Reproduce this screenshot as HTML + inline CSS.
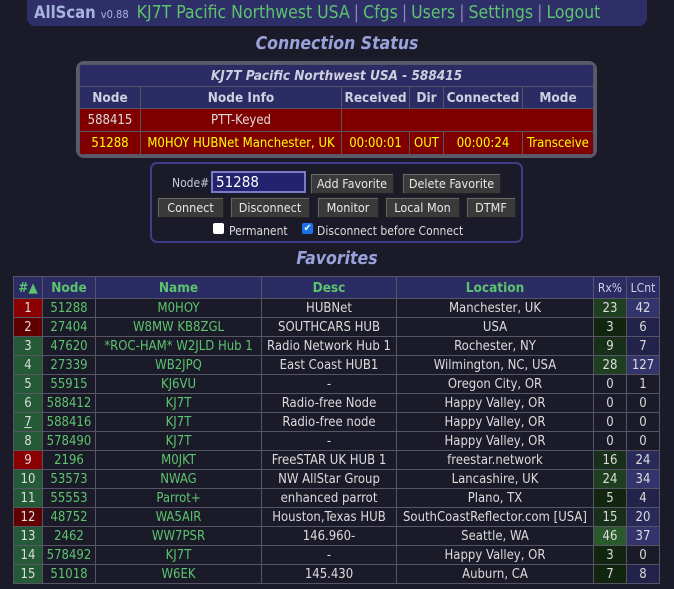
<!DOCTYPE html>
<html><head><meta charset="utf-8"><style>
body{margin:0;background:#1a1a28;font-family:"DejaVu Sans Condensed","Liberation Sans",sans-serif;color:#dcdcdc;width:674px;height:589px;overflow:hidden;position:relative}
.nav{position:absolute;left:27px;top:0;width:620px;height:26px;background:#2e2e68;border-radius:0 0 8px 8px;font-size:17.5px;line-height:25px;white-space:nowrap}
.nav b{color:#a8b4e0;margin-left:7px;font-size:16.5px}
.nav small{color:#a8b4e0;font-size:11px;margin-right:8px}
.nav span{color:#5cc46e}
.nav i{color:#8a8ab0;font-style:normal;margin:0 4px}
h2{position:absolute;margin:0;width:674px;text-align:center;font-style:italic;font-weight:bold;color:#9aa2dc;font-size:17.5px}
table{border-collapse:collapse;font-size:13px}
td,th{border:1px solid #555566;text-align:center;padding:0;white-space:nowrap}
.stw{position:absolute;left:76px;top:61px;width:515px;border:3px solid #5a5a6a;border-radius:8px;overflow:hidden}
.st{width:100%;font-size:13px}
.st th{background:#2c2c64;color:#cfcfe0;height:21px;font-size:13.5px}
.st td{background:#800000;height:22px}
.ctl{position:absolute;left:150px;top:162px;width:369px;height:77px;border:2px solid #3e3e88;border-radius:7px;font-size:12px}
.btn{position:absolute;background:#3a3a3a;border:1px solid #222;box-shadow:inset 1px 1px #666;color:#e8e8e8;font-size:12.5px;text-align:center;line-height:19px;height:19px}
.fav{position:absolute;left:13px;top:276px;width:647px;border:1px solid #555566}
.fav th{background:#2c2c64;color:#5cc46e;height:21px;font-size:13.5px}
.fav td{height:18px;color:#5cc46e}
.fav td.w{color:#dcdcdc}
.r{background:#8b0000}.dr{background:#600000}.g{background:#245a36}
.g1{background:#12260f}.g2{background:#18301a}.g3{background:#1e4020}.g4{background:#2a5a2e}
.b1{background:#22224a}.b2{background:#2a2a5a}.b3{background:#34346c}
</style></head><body>
<div class="nav"><b>AllScan</b> <small>v0.88</small><span>KJ7T Pacific Northwest USA</span><i>|</i><span>Cfgs</span><i>|</i><span>Users</span><i>|</i><span>Settings</span><i>|</i><span>Logout</span></div>
<h2 style="top:34px">Connection Status</h2>
<div class="stw">
<table class="st">
<tr><th colspan="6" style="font-style:italic">KJ7T Pacific Northwest USA - 588415</th></tr>
<tr><th style="width:60px">Node</th><th style="width:200px">Node Info</th><th style="width:67px">Received</th><th style="width:33px">Dir</th><th style="width:78px">Connected</th><th>Mode</th></tr>
<tr><td>588415</td><td>PTT-Keyed</td><td colspan="4"></td></tr>
<tr style="color:#ffff00"><td>51288</td><td>M0HOY HUBNet Manchester, UK</td><td>00:00:01</td><td>OUT</td><td>00:00:24</td><td>Transceive</td></tr>
</table></div>
<div class="ctl">
<span style="position:absolute;left:20px;top:12px;color:#c8c8d8">Node#</span>
<div style="position:absolute;left:59px;top:7px;width:88px;height:18px;background:#22226e;border:2px solid #7a7ac8;color:#fff;font-size:15px;line-height:18px;padding-left:3px">51288</div>
<div class="btn" style="left:158px;top:9px;width:82px">Add Favorite</div>
<div class="btn" style="left:250px;top:9px;width:97px">Delete Favorite</div>
<div class="btn" style="left:5px;top:33px;width:65px">Connect</div>
<div class="btn" style="left:78px;top:33px;width:78px">Disconnect</div>
<div class="btn" style="left:165px;top:33px;width:60px">Monitor</div>
<div class="btn" style="left:233px;top:33px;width:73px">Local Mon</div>
<div class="btn" style="left:314px;top:33px;width:48px">DTMF</div>
<div style="position:absolute;left:61px;top:59px;width:11px;height:11px;background:#fff;border-radius:2px"></div>
<span style="position:absolute;left:77px;top:60px">Permanent</span>
<div style="position:absolute;left:150px;top:59px;width:11px;height:11px;background:#1a73e8;border-radius:2px;color:#fff;font-size:10px;line-height:11px;text-align:center">✔</div>
<span style="position:absolute;left:165px;top:60px">Disconnect before Connect</span>
</div>
<h2 style="top:249px">Favorites</h2>
<table class="fav">
<tr><th style="width:28px">#▲</th><th style="width:52px">Node</th><th style="width:165px">Name</th><th style="width:134px">Desc</th><th style="width:196px">Location</th><th style="width:32px;color:#cfcfe0;font-weight:normal;font-size:12px">Rx%</th><th style="color:#cfcfe0;font-weight:normal;font-size:12px">LCnt</th></tr>
<tr><td class="w r">1</td><td>51288</td><td>M0HOY</td><td class="w">HUBNet</td><td class="w">Manchester, UK</td><td class="w g3">23</td><td class="w b3">42</td></tr>
<tr><td class="w dr">2</td><td>27404</td><td>W8MW KB8ZGL</td><td class="w">SOUTHCARS HUB</td><td class="w">USA</td><td class="w g1">3</td><td class="w b1">6</td></tr>
<tr><td class="w g">3</td><td>47620</td><td>*ROC-HAM* W2JLD Hub 1</td><td class="w">Radio Network Hub 1</td><td class="w">Rochester, NY</td><td class="w g2">9</td><td class="w b1">7</td></tr>
<tr><td class="w g">4</td><td>27339</td><td>WB2JPQ</td><td class="w">East Coast HUB1</td><td class="w">Wilmington, NC, USA</td><td class="w g3">28</td><td class="w b3">127</td></tr>
<tr><td class="w g">5</td><td>55915</td><td>KJ6VU</td><td class="w">-</td><td class="w">Oregon City, OR</td><td class="w">0</td><td class="w">1</td></tr>
<tr><td class="w g">6</td><td>588412</td><td>KJ7T</td><td class="w">Radio-free Node</td><td class="w">Happy Valley, OR</td><td class="w">0</td><td class="w">0</td></tr>
<tr><td class="w g"><u>7</u></td><td>588416</td><td>KJ7T</td><td class="w">Radio-free node</td><td class="w">Happy Valley, OR</td><td class="w">0</td><td class="w">0</td></tr>
<tr><td class="w g">8</td><td>578490</td><td>KJ7T</td><td class="w">-</td><td class="w">Happy Valley, OR</td><td class="w">0</td><td class="w">0</td></tr>
<tr><td class="w r">9</td><td>2196</td><td>M0JKT</td><td class="w">FreeSTAR UK HUB 1</td><td class="w">freestar.network</td><td class="w g2">16</td><td class="w b2">24</td></tr>
<tr><td class="w g">10</td><td>53573</td><td>NWAG</td><td class="w">NW AllStar Group</td><td class="w">Lancashire, UK</td><td class="w g3">24</td><td class="w b3">34</td></tr>
<tr><td class="w g">11</td><td>55553</td><td>Parrot+</td><td class="w">enhanced parrot</td><td class="w">Plano, TX</td><td class="w g1">5</td><td class="w b1">4</td></tr>
<tr><td class="w dr">12</td><td>48752</td><td>WA5AIR</td><td class="w">Houston,Texas HUB</td><td class="w">SouthCoastReflector.com [USA]</td><td class="w g2">15</td><td class="w b2">20</td></tr>
<tr><td class="w g">13</td><td>2462</td><td>WW7PSR</td><td class="w">146.960-</td><td class="w">Seattle, WA</td><td class="w g4">46</td><td class="w b3">37</td></tr>
<tr><td class="w g">14</td><td>578492</td><td>KJ7T</td><td class="w">-</td><td class="w">Happy Valley, OR</td><td class="w g1">3</td><td class="w">0</td></tr>
<tr><td class="w g">15</td><td>51018</td><td>W6EK</td><td class="w">145.430</td><td class="w">Auburn, CA</td><td class="w g1">7</td><td class="w b1">8</td></tr>
</table>
</body></html>
